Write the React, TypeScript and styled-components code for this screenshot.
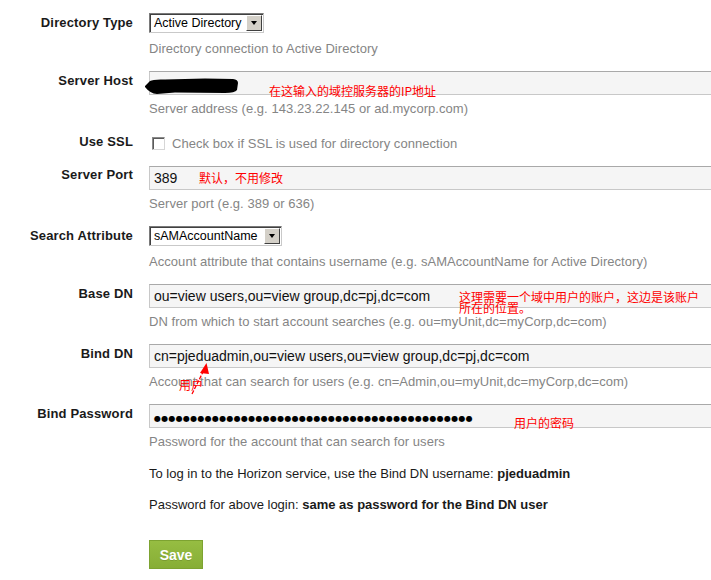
import React from "react";
import styled, { createGlobalStyle } from "styled-components";

const Global = createGlobalStyle`
  html, body { margin: 0; padding: 0; background: #fff; overflow: hidden; }
  body { font-family: "Liberation Sans", Arial, sans-serif; }
`;

const Page = styled.div`
  position: relative;
  width: 711px;
  height: 580px;
  padding-top: 13px;
  box-sizing: border-box;
  overflow: hidden;
`;

const Row = styled.div<{ $mb?: number; $mt?: number }>`
  display: grid;
  grid-template-columns: 149px 1fr;
  margin-top: ${(p) => p.$mt ?? 0}px;
  margin-bottom: ${(p) => p.$mb ?? 14}px;
`;

const Label = styled.div<{ $pt?: number }>`
  text-align: right;
  padding-right: 16px;
  padding-top: ${(p) => p.$pt ?? 2}px;
  font-size: 13px;
  line-height: 16px;
  font-weight: bold;
  letter-spacing: 0.15px;
  color: #1a1a1a;
`;

const Field = styled.div<{ $pt?: number }>`
  display: flex;
  flex-direction: column;
  align-items: flex-start;
  padding-top: ${(p) => p.$pt ?? 0}px;
  min-width: 0;
`;

const Help = styled.div<{ $mt?: number }>`
  margin-top: ${(p) => p.$mt ?? 6}px;
  font-size: 13px;
  line-height: 16px;
  letter-spacing: 0.05px;
  color: #858585;
`;

const TextBox = styled.div`
  position: relative;
  box-sizing: border-box;
  width: 600px;
  height: 24px;
  background: #f5f5f5;
  border: 1px solid #c8c8c8;
  border-top-color: #a9a9a9;
  padding-left: 4px;
  font-size: 14px;
  line-height: 22px;
  color: #111;
  white-space: nowrap;
`;

const Dots = styled.span`
  font-family: "DejaVu Sans", sans-serif;
  font-size: 8px;
  letter-spacing: 0.27px;
  color: #000;
`;

const SelectBox = styled.div<{ $w: number }>`
  box-sizing: border-box;
  width: ${(p) => p.$w}px;
  height: 20px;
  display: flex;
  align-items: stretch;
  border: 1px solid #7a7a7a;
  border-right-color: #c9c9c9;
  border-bottom-color: #c9c9c9;
  background: #fff;
  box-shadow: inset 1px 1px 0 #404040;
`;

const SelectText = styled.span`
  flex: 1;
  padding-left: 4px;
  padding-top: 1px;
  font-size: 12.5px;
  line-height: 16px;
  color: #000;
  white-space: nowrap;
  overflow: hidden;
`;

const SelectButton = styled.span`
  width: 16px;
  margin: 1px 1px 1px 0;
  box-sizing: border-box;
  background: #d4d0c8;
  border: 1px solid #fff;
  border-right-color: #404040;
  border-bottom-color: #404040;
  display: flex;
  align-items: center;
  justify-content: center;
`;

const Arrow = styled.span`
  width: 0;
  height: 0;
  border-left: 3.5px solid transparent;
  border-right: 3.5px solid transparent;
  border-top: 4px solid #000;
`;

const CheckLine = styled.div`
  display: flex;
  align-items: center;
  gap: 7px;
  padding-left: 3px;
  font-size: 13px;
  line-height: 16px;
  letter-spacing: 0.05px;
  color: #858585;
`;

const CheckBox = styled.span`
  width: 13px;
  height: 13px;
  box-sizing: border-box;
  border: 1px solid #8a8a8a;
  border-right-color: #d6d6d6;
  border-bottom-color: #d6d6d6;
  box-shadow: inset 1px 1px 0 #5a5a5a;
  background: #fff;
  margin-top: -2px;
`;

const Info = styled.div<{ $mb: number }>`
  padding-left: 149px;
  font-size: 13px;
  line-height: 16px;
  color: #1a1a1a;
  margin-bottom: ${(p) => p.$mb}px;
`;

const SaveButton = styled.button`
  margin-left: 149px;
  width: 54px;
  height: 29px;
  border: 1px solid #7da331;
  background: linear-gradient(#96bd42, #87ae36);
  color: #fff;
  font-family: "Liberation Sans", Arial, sans-serif;
  font-weight: bold;
  font-size: 14px;
  padding: 0;
  text-shadow: 0 1px 0 rgba(0, 0, 0, 0.15);
`;

const Note = styled.div<{ $x: number; $y: number; $lh?: number }>`
  position: absolute;
  left: ${(p) => p.$x}px;
  top: ${(p) => p.$y}px;
  font-family: "Noto Sans CJK SC", sans-serif;
  font-size: 12px;
  line-height: ${(p) => p.$lh ?? 12}px;
  color: #ff0000;
  white-space: nowrap;
`;

const Overlay = styled.svg<{ $x: number; $y: number }>`
  position: absolute;
  left: ${(p) => p.$x}px;
  top: ${(p) => p.$y}px;
`;

const Select = ({ w, value }: { w: number; value: string }) => (
  <SelectBox $w={w}>
    <SelectText>{value}</SelectText>
    <SelectButton>
      <Arrow />
    </SelectButton>
  </SelectBox>
);

export default function App() {
  return (
    <Page>
      <Global />
      <Row>
        <Label>Directory Type</Label>
        <Field>
          <Select w={115} value="Active Directory" />
          <Help $mt={8}>Directory connection to Active Directory</Help>
        </Field>
      </Row>
      <Row $mb={17}>
        <Label>Server Host</Label>
        <Field>
          <TextBox />
          <Help>Server address (e.g. 143.23.22.145 or ad.mycorp.com)</Help>
        </Field>
      </Row>
      <Row>
        <Label $pt={0}>Use SSL</Label>
        <Field $pt={2}>
          <CheckLine>
            <CheckBox />
            Check box if SSL is used for directory connection
          </CheckLine>
        </Field>
      </Row>
      <Row>
        <Label $pt={1}>Server Port</Label>
        <Field>
          <TextBox>389</TextBox>
          <Help>Server port (e.g. 389 or 636)</Help>
        </Field>
      </Row>
      <Row>
        <Label>Search Attribute</Label>
        <Field>
          <Select w={133} value="sAMAccountName" />
          <Help $mt={8}>Account attribute that contains username (e.g. sAMAccountName for Active Directory)</Help>
        </Field>
      </Row>
      <Row>
        <Label>Base DN</Label>
        <Field>
          <TextBox>ou=view users,ou=view group,dc=pj,dc=com</TextBox>
          <Help>DN from which to start account searches (e.g. ou=myUnit,dc=myCorp,dc=com)</Help>
        </Field>
      </Row>
      <Row>
        <Label>Bind DN</Label>
        <Field>
          <TextBox>cn=pjeduadmin,ou=view users,ou=view group,dc=pj,dc=com</TextBox>
          <Help>Account that can search for users (e.g. cn=Admin,ou=myUnit,dc=myCorp,dc=com)</Help>
        </Field>
      </Row>
      <Row $mb={16}>
        <Label>Bind Password</Label>
        <Field>
          <TextBox>
            <Dots>{"●".repeat(44)}</Dots>
          </TextBox>
          <Help>Password for the account that can search for users</Help>
        </Field>
      </Row>
      <Info $mb={15}>
        To log in to the Horizon service, use the Bind DN username: <b>pjeduadmin</b>
      </Info>
      <Info $mb={27}>
        Password for above login: <b>same as password for the Bind DN user</b>
      </Info>
      <SaveButton>Save</SaveButton>

      <Overlay $x={145} $y={78} width={94} height={17} viewBox="0 0 94 17">
        <path
          d="M0 8 L5 3 Q8 1 20 1.5 L60 0.5 L88 1 Q93 1.5 93 5 L92 12 Q90 15 80 15 L30 14.5 L12 16 Q5 15.5 0 9 Z"
          fill="#000"
        />
      </Overlay>
      <Note $x={269} $y={85}>在这输入的域控服务器的IP地址</Note>
      <Note $x={199} $y={172}>默认，不用修改</Note>
      <Note $x={459} $y={291} $lh={11}>
        这理需要一个域中用户的账户，这边是该账户
        <br />
        所在的位置。
      </Note>
      <Overlay $x={185} $y={360} width={30} height={36} viewBox="0 0 30 36">
        <line x1="7" y1="34" x2="19" y2="10" stroke="#ff0000" strokeWidth="1.3" strokeDasharray="4 1.5" />
        <polygon points="21.5,3 15,13 24,14" fill="#ff0000" />
      </Overlay>
      <Note $x={179} $y={379}>用户</Note>
      <Note $x={514} $y={417}>用户的密码</Note>
    </Page>
  );
}
